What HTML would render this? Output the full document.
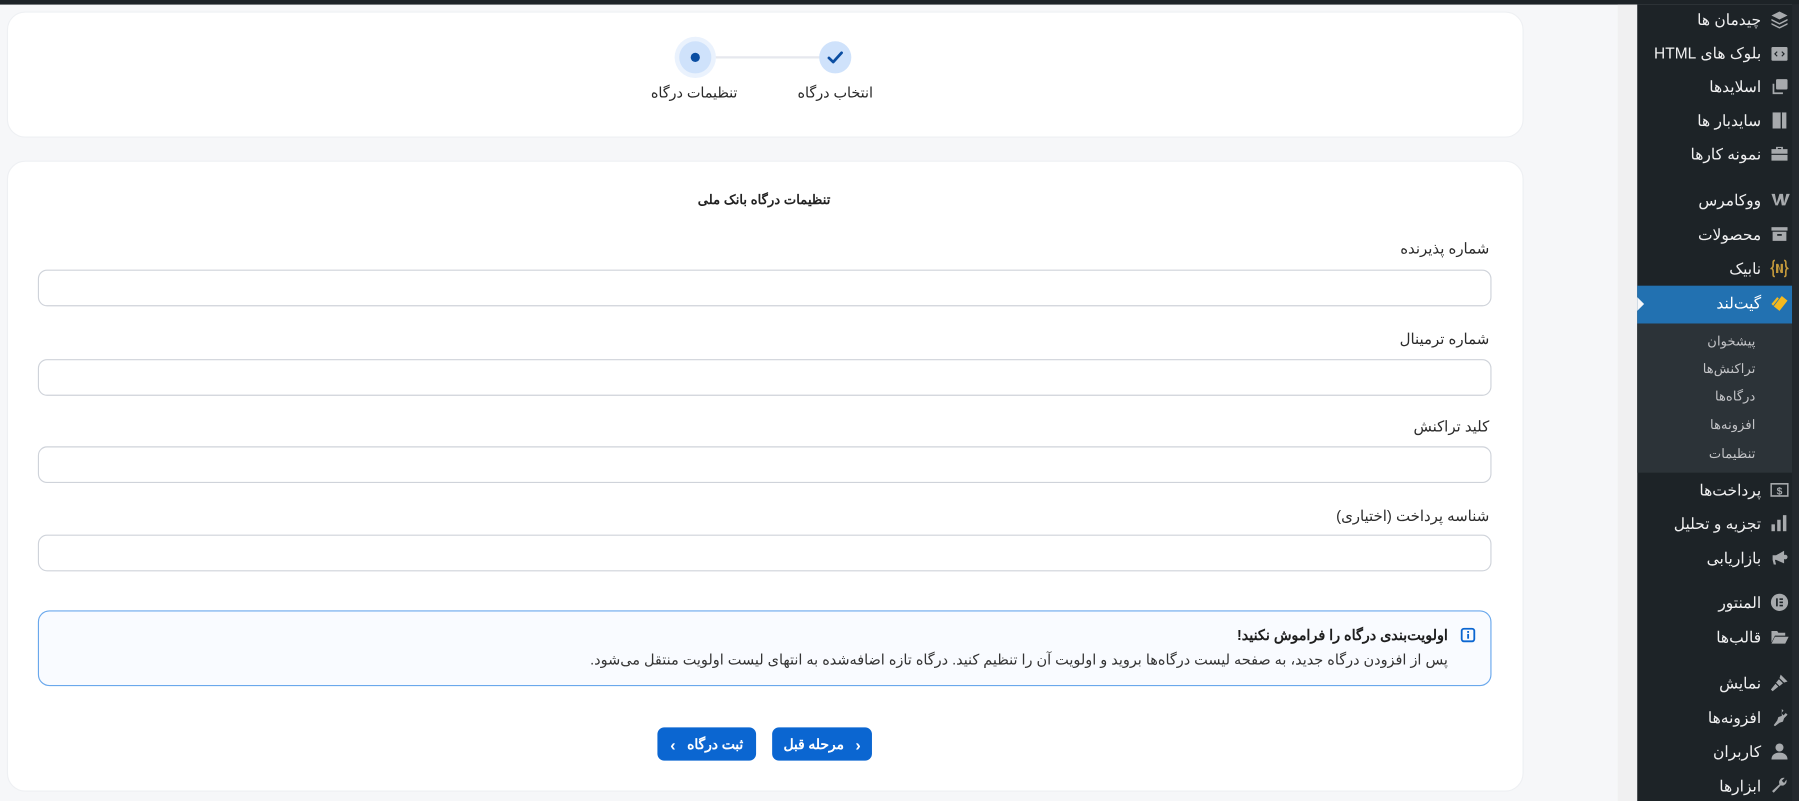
<!DOCTYPE html>
<html><head><meta charset="utf-8"><style>
*{box-sizing:border-box;margin:0;padding:0}
html,body{width:1799px;height:801px;overflow:hidden;background:#f6f7f9}
body{font-family:"Liberation Sans","Noto Sans CJK SC",sans-serif;position:relative;color:#1e1e1e}
#w{position:absolute;left:0;top:0;width:1568px;height:699px;transform:scale(1.14732);transform-origin:0 0}
.abs{position:absolute}
.topbar{left:0;top:0;width:1568px;height:4px;background:#1d2327}
.gutter{left:1410px;top:4px;width:17px;height:697px;background:#f0f0f1}
.card{background:#fff;border-radius:16px;border:1px solid #eef0f3}
.r{direction:rtl;white-space:nowrap}
.lbl{right:270px;font-size:13px;color:#2c2c2c}
.inp{left:33px;width:1267px;height:32px;border:1px solid #cfd3da;border-radius:8px;background:#fff}
.side{left:1427px;top:4px;width:141px;height:697px;background:#1d2327}
.item{position:absolute;right:33px;font-size:13.5px;color:#f0f0f1;direction:rtl;white-space:nowrap;line-height:16px}
.ic{position:absolute;left:1543px;width:16px;height:16px;fill:#a7aaad}
.sub{position:absolute;right:38px;font-size:11.5px;color:#c3c4c7;direction:rtl;white-space:nowrap}
.btn{height:29px;border-radius:6px;background:#0b66d1;color:#fff;font-size:12px;font-weight:bold;display:flex;align-items:center;justify-content:center;gap:10px;direction:rtl}
</style></head><body><div id="w">
<div class="abs topbar"></div>
<div class="abs gutter"></div>

<div class="abs card" style="left:6px;top:10px;width:1322px;height:110px"></div>
<div class="abs" style="left:620px;top:49px;width:95px;height:2px;background:#e6e8ee"></div>
<div class="abs" style="left:714px;top:36px;width:28px;height:28px;border-radius:50%;background:#cfe2fb"></div>
<svg class="abs" style="left:719px;top:41px" width="18" height="18" viewBox="0 0 18 18"><path d="M3.5 9.5l3.7 3.6L14.5 5" stroke="#0b4ea2" stroke-width="2.4" fill="none" stroke-linecap="round" stroke-linejoin="round"/></svg>
<div class="abs" style="left:588px;top:32px;width:36px;height:36px;border-radius:50%;background:#eaf2fd"></div>
<div class="abs" style="left:592px;top:36px;width:28px;height:28px;border-radius:50%;background:#cfe2fb"></div>
<div class="abs" style="left:602px;top:46px;width:8px;height:8px;border-radius:50%;background:#0b4ea2"></div>
<div class="abs r" style="left:688px;width:80px;text-align:center;top:73px;font-size:12.5px;color:#2a2a2a">انتخاب درگاه</div>
<div class="abs r" style="left:560px;width:90px;text-align:center;top:73px;font-size:12.5px;color:#2a2a2a">تنظیمات درگاه</div>

<div class="abs card" style="left:6px;top:140px;width:1322px;height:550px"></div>
<div class="abs r" style="left:566px;width:200px;text-align:center;top:167px;font-size:11.5px;font-weight:bold;color:#222">تنظیمات درگاه بانک ملی</div>

<div class="abs r lbl" style="top:209px">شماره پذیرنده</div>
<div class="abs inp" style="top:235px"></div>
<div class="abs r lbl" style="top:288px">شماره ترمینال</div>
<div class="abs inp" style="top:313px"></div>
<div class="abs r lbl" style="top:364px">کلید تراکنش</div>
<div class="abs inp" style="top:389px"></div>
<div class="abs r lbl" style="top:442px">شناسه پرداخت (اختیاری)</div>
<div class="abs inp" style="top:466px"></div>

<div class="abs" style="left:33px;top:532px;width:1267px;height:66px;border:1px solid #6aa8ec;border-radius:10px;background:#f9fbff"></div>
<svg class="abs" style="left:1273px;top:547px" width="13" height="13" viewBox="0 0 13 13"><rect x="1" y="1" width="11" height="11" rx="2" fill="none" stroke="#0b66d1" stroke-width="1.6"/><rect x="5.8" y="5.5" width="1.6" height="4.2" fill="#0b66d1"/><rect x="5.8" y="3" width="1.6" height="1.6" fill="#0b66d1"/></svg>
<div class="abs r" style="right:306px;top:546px;font-size:12.5px;font-weight:bold;color:#1e1e1e">اولویت‌بندی درگاه را فراموش نکنید!</div>
<div class="abs r" style="right:306px;top:567px;font-size:12.6px;color:#333">پس از افزودن درگاه جدید، به صفحه لیست درگاه‌ها بروید و اولویت آن را تنظیم کنید. درگاه تازه اضافه‌شده به انتهای لیست اولویت منتقل می‌شود.</div>

<div class="abs btn" style="left:673px;top:634px;width:87px"><span style="font-size:14px">‹</span><span>مرحله قبل</span></div>
<div class="abs btn" style="left:573px;top:634px;width:86px"><span>ثبت درگاه</span><span style="font-size:14px">›</span></div>

<div class="abs side"></div>
<div class="abs" style="left:1427px;top:249px;width:135px;height:33px;background:#2271b1"></div>
<div class="abs" style="left:1427px;top:259px;width:0;height:0;border-top:6px solid transparent;border-bottom:6px solid transparent;border-left:6px solid #f6f7f9"></div>
<div class="abs" style="left:1427px;top:282px;width:135px;height:130px;background:#2c3338"></div>
<div class="abs" style="left:1562px;top:4px;width:6px;height:697px;background:#23282d"></div>

<div class="item" style="top:10px">چیدمان ها</div>
<div class="item" style="top:39px">بلوک های HTML</div>
<div class="item" style="top:68px">اسلایدها</div>
<div class="item" style="top:98px">سایدبار ها</div>
<div class="item" style="top:127px">نمونه کارها</div>
<div class="item" style="top:167px">ووکامرس</div>
<div class="item" style="top:197px">محصولات</div>
<div class="item" style="top:227px">نابیک</div>
<div class="item" style="top:257px;color:#fff">گیت‌لند</div>
<div class="sub" style="top:290px">پیشخوان</div>
<div class="sub" style="top:314px">تراکنش‌ها</div>
<div class="sub" style="top:338px">درگاه‌ها</div>
<div class="sub" style="top:363px">افزونه‌ها</div>
<div class="sub" style="top:388px">تنظیمات</div>
<div class="item" style="top:420px">پرداخت‌ها</div>
<div class="item" style="top:449px">تجزیه و تحلیل</div>
<div class="item" style="top:479px">بازاریابی</div>
<div class="item" style="top:518px">المنتور</div>
<div class="item" style="top:548px">قالب‌ها</div>
<div class="item" style="top:588px">نمایش</div>
<div class="item" style="top:618px">افزونه‌ها</div>
<div class="item" style="top:648px">کاربران</div>
<div class="item" style="top:678px">ابزارها</div>

<svg class="ic" style="top:9px" viewBox="0 0 16 16"><path d="M8 1l7 3.5L8 8 1 4.5z M1 7.5L8 11l7-3.5v1.5L8 12.5 1 9z M1 11l7 3.5 7-3.5v1.5L8 16 1 12.5z"/></svg>
<svg class="ic" style="top:39px" viewBox="0 0 16 16"><rect x="1" y="2" width="14" height="12" rx="1"/><path d="M6 6L4 8l2 2M10 6l2 2-2 2" stroke="#1d2327" fill="none"/></svg>
<svg class="ic" style="top:68px" viewBox="0 0 16 16"><rect x="5" y="1" width="10" height="9" rx="1"/><path d="M2 5h1.5v7.5H11V14H2z"/></svg>
<svg class="ic" style="top:97px" viewBox="0 0 16 16"><rect x="2" y="1" width="12" height="14"/><rect x="9" y="1" width="1.2" height="14" fill="#1d2327"/></svg>
<svg class="ic" style="top:126px" viewBox="0 0 16 16"><path d="M5 4V2h6v2h4v10H1V4zM6.5 3v1h3V3z"/><rect x="1" y="8" width="14" height="1" fill="#1d2327"/></svg>
<svg class="ic" style="top:166px;width:18px" viewBox="0 0 18 16"><path d="M1 3h3l1.5 8L8 3h3l1 8 2-8h3l-4 10h-3l-1-6-2.5 6H4.5z"/></svg>
<svg class="ic" style="top:196px" viewBox="0 0 16 16"><rect x="1" y="2" width="14" height="3"/><path d="M2 6h12v8H2z"/><rect x="6" y="8" width="4" height="1.5" fill="#1d2327"/></svg>
<svg class="ic" style="top:226px;fill:none" viewBox="0 0 16 16"><path d="M4 1C2 1 2.5 3 2.5 5S1 8 1 8s1.5 0 1.5 3S2 15 4 15M12 1c2 0 1.5 2 1.5 4s1.5 3 1.5 3-1.5 0-1.5 3 .5 4-1.5 4" stroke="#c59a3c" stroke-width="1.4"/><path d="M5 4h2l2 6V4h2v8H9L7 6v6H5z" fill="#c59a3c"/></svg>
<svg class="ic" style="top:257px" viewBox="0 0 16 16"><path d="M3 10l7-9 5 4-7 9z M1 8l5-6 1.5 1.2L2.5 9.5z" fill="#f5b91e"/></svg>
<svg class="ic" style="top:419px" viewBox="0 0 16 16"><rect x="0.7" y="2.7" width="14.6" height="10.6" fill="none" stroke="#a7aaad" stroke-width="1.4"/><text x="8" y="12" font-size="9" font-weight="bold" text-anchor="middle" fill="#a7aaad" font-family="Liberation Sans">$</text></svg>
<svg class="ic" style="top:448px" viewBox="0 0 16 16"><rect x="1" y="9" width="3" height="6"/><rect x="6" y="5" width="3" height="10"/><rect x="11" y="1" width="3" height="14"/></svg>
<svg class="ic" style="top:478px" viewBox="0 0 16 16"><path d="M2 6h3l7-4v11l-7-3H4l1 4H3l-1-4z"/><circle cx="13" cy="7.5" r="2"/></svg>
<svg class="ic" style="top:517px" viewBox="0 0 16 16"><circle cx="8" cy="8" r="7.5"/><rect x="5" y="4.5" width="1.5" height="7" fill="#1d2327"/><rect x="8" y="4.5" width="3" height="1.4" fill="#1d2327"/><rect x="8" y="7.3" width="3" height="1.4" fill="#1d2327"/><rect x="8" y="10.1" width="3" height="1.4" fill="#1d2327"/></svg>
<svg class="ic" style="top:547px" viewBox="0 0 16 16"><path d="M1 3h5l1 1.5h6V7H4L1 13z M4 8h12l-3 6H1z"/></svg>
<svg class="ic" style="top:587px" viewBox="0 0 16 16"><path d="M9 1l6 6-3 1-4-4zM7.5 5L11 8.5 8 11 5 8zM4.5 9l2.5 2.5-5 4-1.5-1.5z"/></svg>
<svg class="ic" style="top:617px" viewBox="0 0 16 16"><path d="M10 1l1.5 1.5-2 2 2 2 2-2L15 6l-3 3-1 3-3 1-4 3-1-1 3-4 1-3 3-1z"/></svg>
<svg class="ic" style="top:647px" viewBox="0 0 16 16"><circle cx="8" cy="4.5" r="3.5"/><path d="M1 15c0-4 3-6 7-6s7 2 7 6z"/></svg>
<svg class="ic" style="top:677px" viewBox="0 0 16 16"><path d="M14 2.5a4 4 0 0 1-5 5L3 14l-1.5-1.5L8 6.5A4 4 0 0 1 12.5 1L10 3.5l2 2z"/></svg>
</div></body></html>
